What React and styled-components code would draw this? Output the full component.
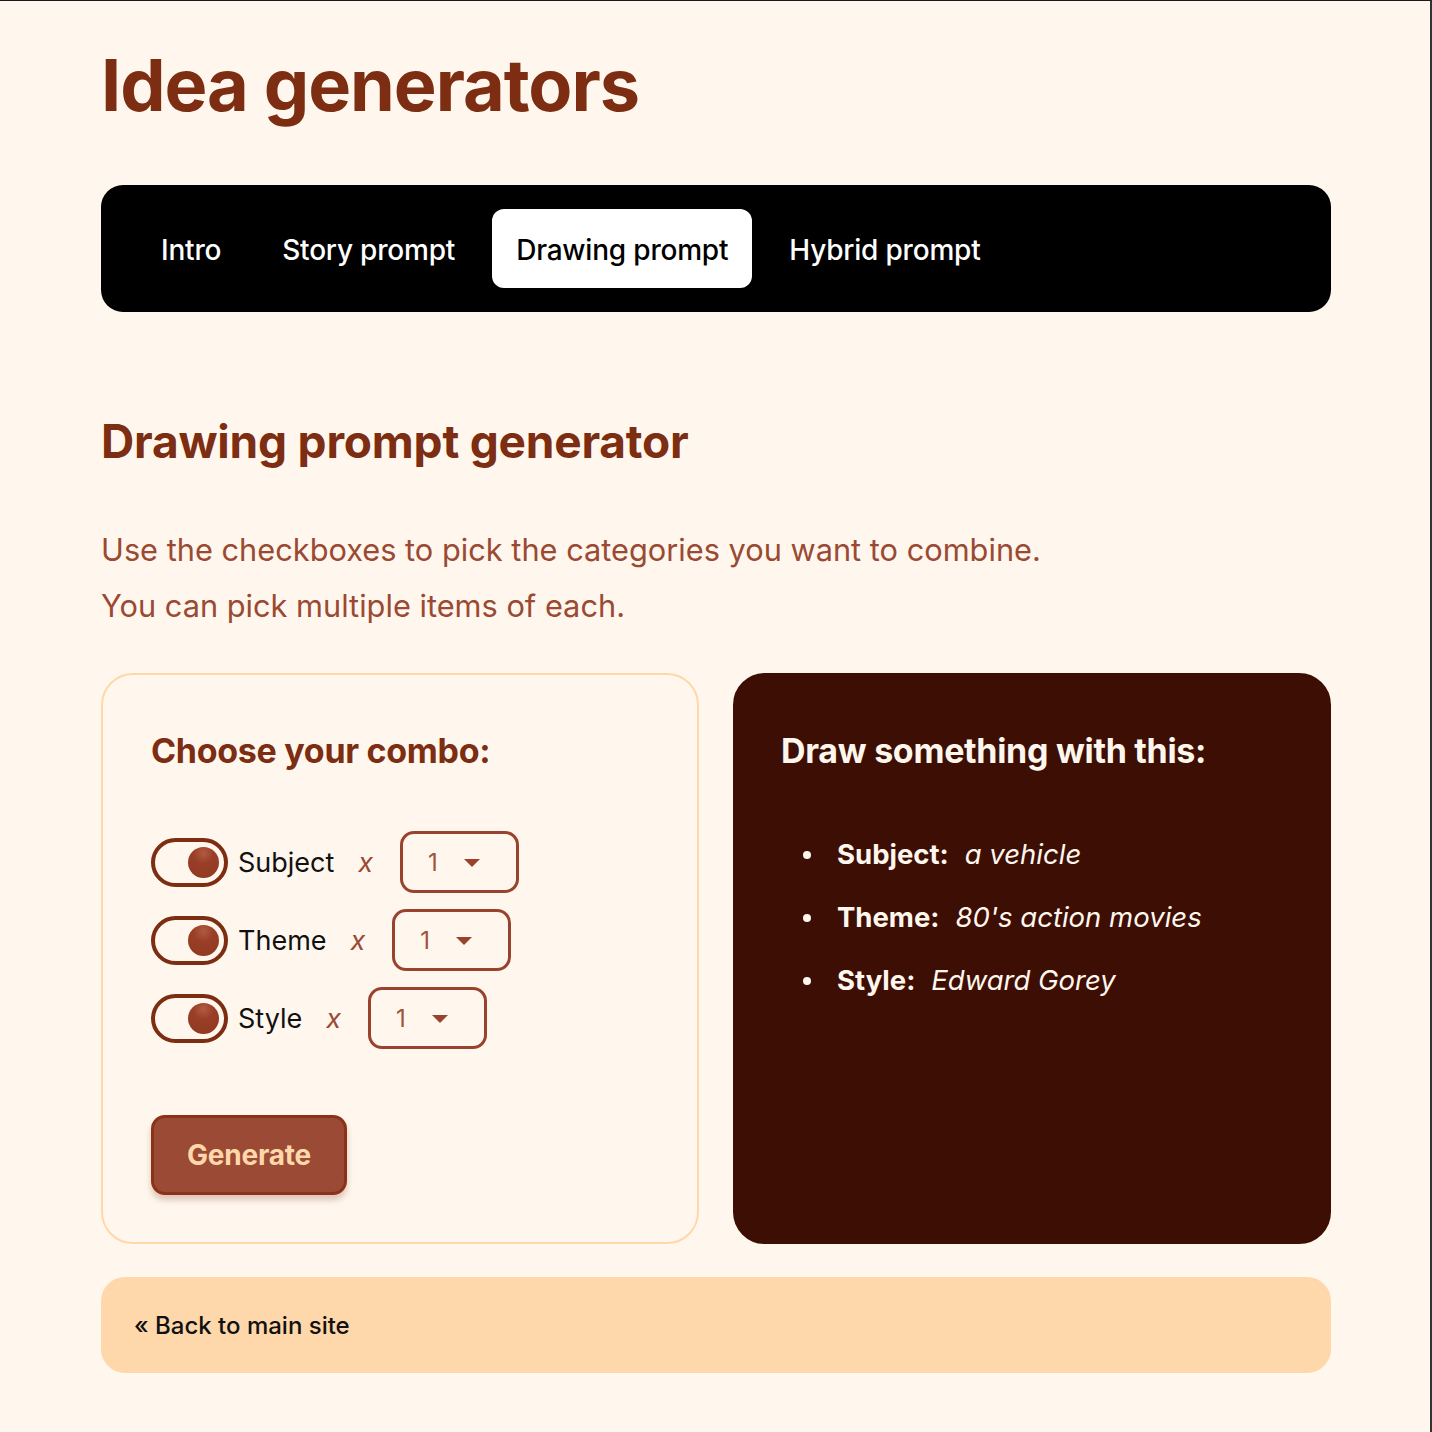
import React from "react";
import styled, { createGlobalStyle } from "styled-components";

const Global = createGlobalStyle`
  html, body { margin: 0; padding: 0; background: #fff7ed; }
  body { font-family: Inter, "Noto Sans", sans-serif; }
  * { box-sizing: border-box; }
`;

const Frame = styled.div`
  min-height: 1432px;
  border-top: 1px solid #1a1a1a;
  border-right: 2px solid #333;
  background: #fff7ed;
  padding: 0 99px 60px 101px;
`;

const Title = styled.h1`
  margin: 0;
  padding-top: 40px;
  font-size: 72px;
  line-height: 88px;
  font-weight: 700;
  letter-spacing: -1.05px;
  color: #7c2d12;
`;

const Nav = styled.nav`
  margin-top: 56px;
  background: #000;
  border-radius: 22px;
  padding: 24px 36px;
  display: flex;
  gap: 13px;
`;

const Tab = styled.a`
  display: block;
  padding: 3px 24px 0;
  height: 79px;
  line-height: 76px;
  border-radius: 12px;
  font-size: 28px;
  font-weight: 500;
  color: ${(p) => (p.$active ? "#000" : "#fff")};
  background: ${(p) => (p.$active ? "#fff" : "transparent")};
  text-decoration: none;
  letter-spacing: -0.2px;
`;

const H2 = styled.h2`
  margin: 101px 0 0;
  font-size: 46px;
  line-height: 56px;
  font-weight: 700;
  letter-spacing: -0.2px;
  color: #7c2d12;
`;

const Intro = styled.div`
  margin-top: 53px;
`;

const P = styled.p`
  margin: 0;
  font-size: 30.75px;
  line-height: 56px;
  color: #9a4a33;
`;

const Grid = styled.div`
  margin-top: 39px;
  display: grid;
  grid-template-columns: 1fr 1fr;
  gap: 34px;
`;

const Card = styled.section`
  height: 571px;
  border-radius: 32px;
  padding: 48px ${(p) => (p.$dark ? "46px" : "48px")};
  border: 2px solid ${(p) => (p.$dark ? "#3d0e03" : "#fed7aa")};
  background: ${(p) => (p.$dark ? "#3d0e03" : "#fff7ed")};
`;

const CardTitle = styled.h3`
  margin: 0;
  font-size: 34px;
  line-height: 56px;
  font-weight: 700;
  letter-spacing: -0.3px;
  color: ${(p) => (p.$light ? "#fff7ed" : "#7c2d12")};
`;

const Rows = styled.div`
  margin-top: 52px;
  display: flex;
  flex-direction: column;
  gap: 16px;
`;

const Row = styled.div`
  display: flex;
  align-items: center;
  height: 62px;
`;

const Toggle = styled.span`
  position: relative;
  width: 77px;
  height: 49px;
  border: 4px solid #7c2d12;
  border-radius: 25px;
  flex-shrink: 0;
  &::after {
    content: "";
    position: absolute;
    right: 5px;
    top: 5px;
    width: 31px;
    height: 31px;
    border-radius: 50%;
    background: radial-gradient(circle at 50% 20%, #b25a44 0%, #9a3f27 35%, #8f3821 100%);
  }
`;

const Label = styled.span`
  margin-left: 10px;
  font-size: 27px;
  color: #111;
`;

const Times = styled.span`
  margin-left: 24px;
  font-size: 27px;
  font-style: italic;
  color: #9a4a33;
`;

const Select = styled.span`
  margin-left: 27px;
  width: 119px;
  height: 62px;
  border: 3px solid #99432e;
  border-radius: 14px;
  display: flex;
  align-items: center;
  padding-left: 25px;
  font-size: 24px;
  color: #a0523c;
  gap: 26px;
  &::after {
    content: "";
    border-left: 8px solid transparent;
    border-right: 8px solid transparent;
    border-top: 8px solid #99432e;
    margin-top: 2px;
  }
`;

const Button = styled.button`
  margin-top: 66px;
  width: 196px;
  height: 80px;
  border-radius: 14px;
  border: 3px solid #8a3319;
  background: #9b4a36;
  color: #fed7aa;
  font-family: Inter, sans-serif;
  font-size: 28px;
  font-weight: 700;
  box-shadow: 0 5px 6px rgba(124, 45, 18, 0.25);
  letter-spacing: -0.2px;
`;

const List = styled.ul`
  margin: 58px 0 0;
  padding: 0 0 0 56px;
  list-style: none;
  display: flex;
  flex-direction: column;
  gap: 29px;
  color: #fff7ed;
  font-size: 27.5px;
  line-height: 34px;
`;

const Item = styled.li`
  position: relative;
  b { font-weight: 700; margin-right: 16px; }
  i { font-style: italic; }
  &::before {
    content: "";
    position: absolute;
    left: -34px;
    top: 14px;
    width: 8px;
    height: 8px;
    border-radius: 50%;
    background: #fff7ed;
  }
`;

const Footer = styled.footer`
  margin-top: 33px;
  height: 96px;
  border-radius: 24px;
  background: #fed7aa;
  display: flex;
  align-items: center;
  padding-left: 33px;
  font-size: 24px;
  font-weight: 500;
  color: #111;
`;

const combos = [
  { name: "Subject" },
  { name: "Theme" },
  { name: "Style" },
];

export default function App() {
  return (
    <>
      <Global />
      <Frame>
        <Title>Idea generators</Title>
        <Nav>
          <Tab>Intro</Tab>
          <Tab>Story prompt</Tab>
          <Tab $active>Drawing prompt</Tab>
          <Tab>Hybrid prompt</Tab>
        </Nav>
        <H2>Drawing prompt generator</H2>
        <Intro>
          <P>Use the checkboxes to pick the categories you want to combine.</P>
          <P>You can pick multiple items of each.</P>
        </Intro>
        <Grid>
          <Card>
            <CardTitle>Choose your combo:</CardTitle>
            <Rows>
              {combos.map((c) => (
                <Row key={c.name}>
                  <Toggle />
                  <Label>{c.name}</Label>
                  <Times>x</Times>
                  <Select>1</Select>
                </Row>
              ))}
            </Rows>
            <Button>Generate</Button>
          </Card>
          <Card $dark>
            <CardTitle $light>Draw something with this:</CardTitle>
            <List>
              <Item><b>Subject:</b><i>a vehicle</i></Item>
              <Item><b>Theme:</b><i>80's action movies</i></Item>
              <Item><b>Style:</b><i>Edward Gorey</i></Item>
            </List>
          </Card>
        </Grid>
        <Footer>« Back to main site</Footer>
      </Frame>
    </>
  );
}
